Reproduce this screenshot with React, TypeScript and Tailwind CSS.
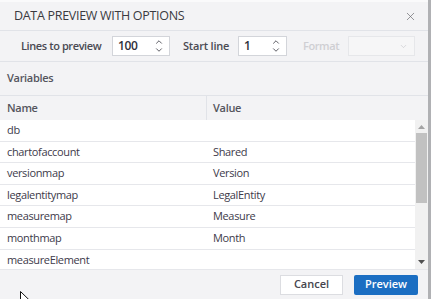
import { X, ChevronUp, ChevronDown } from "lucide-react";

const rows = [
  ["db", ""],
  ["chartofaccount", "Shared"],
  ["versionmap", "Version"],
  ["legalentitymap", "LegalEntity"],
  ["measuremap", "Measure"],
  ["monthmap", "Month"],
  ["measureElement", ""],
];

function Spinner({ value, width }: { value: string; width: string }) {
  return (
    <div className={`${width} h-[20px] shrink-0 bg-white border border-[#d3d5da] flex items-center justify-between pl-[5px] pr-[5px]`}>
      <span className="text-[12px] text-[#2f2f3a] tracking-[-0.3px]">{value}</span>
      <div className="flex flex-col items-center -space-y-[2px] text-[#505058]">
        <ChevronUp size={10} strokeWidth={2.2} />
        <ChevronDown size={10} strokeWidth={2.2} />
      </div>
    </div>
  );
}

export default function App() {
  return (
    <div className="w-[431px] h-[299px] bg-[#b0b1b4] flex overflow-hidden relative font-['Open_Sans',sans-serif]">
      <div className="w-[428px] h-full bg-[#f3f3f5] flex flex-col border-t-2 border-[#fafafb]">
        {/* Title */}
        <div className="h-[29px] shrink-0 flex items-center justify-between pl-[14px] pr-[11px] border-b border-[#e1e3e8]">
          <span className="text-[12.5px] text-[#3a3a40] tracking-[-0.3px] whitespace-nowrap">DATA PREVIEW WITH OPTIONS</span>
          <X size={13} strokeWidth={1.3} className="text-[#6b6b70]" />
        </div>

        {/* Options */}
        <div className="h-[31px] shrink-0 flex items-center pl-[21px] border-b border-[#e1e3e8] whitespace-nowrap text-[11px] font-semibold tracking-[-0.4px]">
          <span className="w-[80px] text-[#4a4a52]">Lines to preview</span>
          <div className="ml-[11px]">
            <Spinner value="100" width="w-[58px]" />
          </div>
          <span className="ml-[13px] w-[45px] text-[#4a4a52] tracking-[-0.2px]">Start line</span>
          <div className="ml-[10px]">
            <Spinner value="1" width="w-[49px]" />
          </div>
          <span className="ml-[16px] w-[35px] text-[#cfcfd3]">Format</span>
          <div className="ml-[10px] w-[67px] h-[20px] shrink-0 border border-[#e6e7ea] bg-[#f6f6f7] flex items-center justify-end pr-[6px]">
            <ChevronDown size={9} strokeWidth={1.6} className="text-[#c5c5c9]" />
          </div>
        </div>

        {/* Variables */}
        <div className="h-[34px] shrink-0 flex items-center pl-[7px] border-b border-[#e1e3e8]">
          <span className="text-[11px] font-semibold text-[#55555d] tracking-[-0.3px]">Variables</span>
        </div>

        {/* Table header */}
        <div className="h-[24px] shrink-0 flex items-center text-[11px] font-semibold text-[#55555d] tracking-[-0.3px]">
          <div className="w-[207px] h-full flex items-center pl-[7px] border-r border-[#e1e3e8]">Name</div>
          <div className="pl-[6px]">Value</div>
        </div>

        {/* Table body */}
        <div className="h-[149px] shrink-0 flex overflow-hidden">
          <div className="w-[415px] bg-white flex flex-col">
            {rows.map(([name, value]) => (
              <div key={name} className="h-[21.6px] shrink-0 flex items-center border-b border-[#e6e7eb] text-[11px] text-[#3d3a4a] tracking-[-0.35px] whitespace-nowrap">
                <div className="w-[207px] pl-[7px]">{name}</div>
                <div className="pl-[6px]">{value}</div>
              </div>
            ))}
          </div>
          <div className="w-[13px] bg-[#f1f1f1] flex flex-col items-center pt-[5px] pb-[5px]">
            <svg width="7" height="4" viewBox="0 0 7 4" className="shrink-0">
              <path d="M0 4 L3.5 0 L7 4 Z" fill="#a3a3a3" />
            </svg>
            <div className="mt-[4px] w-[11px] h-[70px] bg-[#c1c1c1]" />
            <div className="flex-1" />
            <svg width="7" height="4" viewBox="0 0 7 4" className="shrink-0">
              <path d="M0 0 L7 0 L3.5 4 Z" fill="#505050" />
            </svg>
          </div>
        </div>

        {/* Footer */}
        <div className="flex-1 flex items-center justify-end gap-[11px] pr-[10px] border-t border-[#e6e7eb]">
          <button className="w-[63px] h-[20px] bg-white border border-[#dcdde1] text-[11px] font-semibold text-[#45454d]">
            Cancel
          </button>
          <button className="w-[64px] h-[20px] bg-[#1b6ec2] rounded-[2px] text-[11px] font-semibold text-white">
            Preview
          </button>
        </div>
      </div>

      {/* mouse cursor */}
      <svg width="12" height="18" viewBox="0 0 12 18" className="absolute left-[20px] top-[291px]">
        <path d="M0.5 0.5 L0.5 14 L3.8 10.8 L6 16 L8 15.2 L5.8 10.2 L10.5 10.2 Z" fill="#ffffff" stroke="#111" strokeWidth="1" />
      </svg>
    </div>
  );
}
